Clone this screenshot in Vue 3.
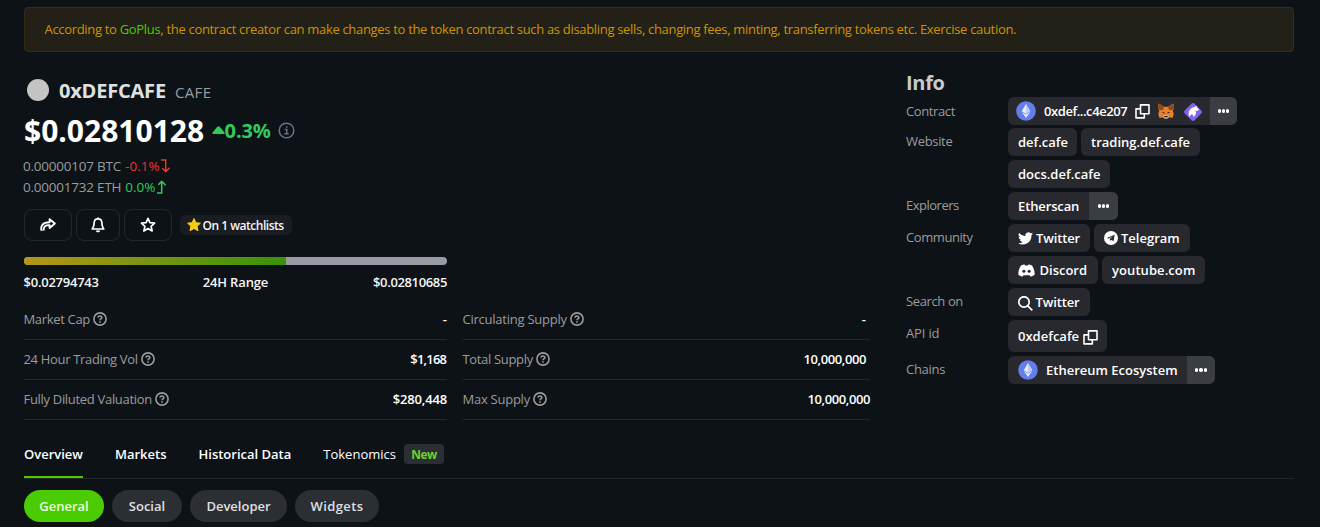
<script setup>
const leftStats = [
  { k: 'Market Cap', v: '-', c: 'cap' },
  { k: '24 Hour Trading Vol', v: '$1,168', c: 'vol' },
  { k: 'Fully Diluted Valuation', v: '$280,448', c: 'fdv' },
]
const rightStats = [
  { k: 'Circulating Supply', v: '-', c: 'circ', inset: true },
  { k: 'Total Supply', v: '10,000,000', c: 'total', inset: true },
  { k: 'Max Supply', v: '10,000,000', c: 'max' },
]
</script>

<template>
  <div class="page">
    <div class="banner"><span class="t warn">According to <a>GoPlus</a>, the contract creator can make changes to the token contract such as disabling sells, changing fees, minting, transferring tokens etc. Exercise caution.</span></div>

    <div class="main">
      <section class="coin">
        <div class="name"><i class="logo"></i><h1 class="t">0xDEFCAFE</h1><span class="t sym">CAFE</span></div>
        <div class="price">
          <span class="t amount">$0.02810128</span>
          <svg class="tri" width="13" height="8" viewBox="0 0 13 8"><path d="M1.2 8Q-.3 7.6.6 6.4L5.3.8Q6.5-.5 7.7.8L12.4 6.4Q13.3 7.6 11.8 8Z" fill="#30cb5c" /></svg>
          <span class="t change">0.3%</span>
          <svg class="infoi" width="17" height="17" viewBox="0 0 17 17" fill="none" stroke="#64718a" stroke-width="1.5"><circle cx="8.5" cy="8.5" r="7.3" /><path d="M6.8 7.6h2v4M6.4 11.7h4.4M8 4.9h1.4" /></svg>
        </div>
        <div class="pair"><span class="t btc">0.00000107 BTC</span><span class="t down">-0.1%</span>
          <svg width="11" height="14" viewBox="0 0 11 14" fill="none" stroke="#e8352e" stroke-width="1.5"><path d="M1 .9h4.7v11.4M2.3 9.2l3.4 3.4 3.9-3.9" /></svg></div>
        <div class="pair"><span class="t eth">0.00001732 ETH</span><span class="t up">0.0%</span>
          <svg width="11" height="14" viewBox="0 0 11 14" fill="none" stroke="#30cb5c" stroke-width="1.5"><path d="M1 13h4.7V1.4M2.3 4.8l3.4-3.4 3.9 3.9" /></svg></div>

        <div class="actions">
          <button class="b48"><svg width="16" height="14" viewBox="0 0 16 14" fill="none" stroke="#fff" stroke-width="1.9" stroke-linejoin="round"><path d="M1.6 12.8C.2 8.2 2.6 4.3 9.6 4.3V1.2L14.8 5.6 9.6 10V7.2C6.2 7 3.4 7.6 3.6 12.6" /></svg></button>
          <button class="b44"><svg width="14" height="16" viewBox="0 0 14 16" fill="none" stroke="#fff" stroke-width="1.7" stroke-linejoin="round"><path d="M7 1.9C4.4 1.9 3.1 3.7 3.1 6.2 3.1 9.4 2.5 10.2 1.3 12H12.7C11.5 10.2 10.9 9.4 10.9 6.2 10.9 3.7 9.6 1.9 7 1.9Z" /><path d="M7 .4v1.5M5.4 13.7q1.6 1.6 3.2 0" /></svg></button>
          <button class="b48"><svg width="16" height="16" viewBox="0 0 16 16" fill="none" stroke="#fff" stroke-width="1.7" stroke-linejoin="round"><path d="M8 1.4L9.9 5.7 14.6 6.2 11.1 9.3 12.1 14 8 11.6 3.9 14 4.9 9.3 1.4 6.2 6.1 5.7Z" /></svg></button>
          <div class="watch"><svg width="14" height="14" viewBox="0 0 14 14"><path d="M7 .6L8.9 4.7 13.4 5.2 10.1 8.3 11 12.8 7 10.5 3 12.8 3.9 8.3.6 5.2 5.1 4.7Z" fill="#facc15" stroke="#facc15" stroke-linejoin="round" /></svg><span class="t wl">On 1 watchlists</span></div>
        </div>

        <div class="bar"><i></i></div>
        <div class="range"><span class="t lo">$0.02794743</span><span class="t mid">24H Range</span><span class="t hi">$0.02810685</span></div>

        <div class="stats">
          <div v-for="(col, i) in [leftStats, rightStats]" :key="i">
            <div v-for="s in col" :key="s.k" class="stat" :class="{ inset: s.inset }">
              <span class="t k" :class="s.c">{{ s.k }}</span>
              <svg width="14" height="14" viewBox="0 0 14 14" fill="none" stroke="#9a9b9d" stroke-width="1.6"><circle cx="7" cy="7" r="6.1" /><path d="M5 5.6C5.2 3.4 9 3.6 8.8 5.7 8.7 6.9 7 6.9 7 8.2M7 9.3v1.5" /></svg>
              <span class="t v" :class="'v' + s.c">{{ s.v }}</span>
            </div>
          </div>
        </div>
      </section>

      <aside>
        <h2><span class="t info">Info</span></h2>
        <div class="row first"><label><span class="t l1">Contract</span></label>
          <div class="chips"><div class="chip contract">
            <svg width="20" height="20" viewBox="0 0 20 20"><circle cx="10" cy="10" r="9.8" fill="#627eea" /><path d="M10 3L5.7 10.2 10 12.7 14.3 10.2Z" fill="#fff" opacity=".85" /><path d="M10 3v5.2L14.3 10.2ZM10 8.2v4.5l4.3-2.5Z" fill="#c0cbf6" /><path d="M5.7 11L10 17l4.3-6L10 13.5Z" fill="#e6eafc" /></svg>
            <span class="t addr">0xdef...c4e207</span>
            <svg class="copy" width="15" height="15" viewBox="0 0 15 15" fill="none" stroke="#fff" stroke-width="1.6" stroke-linejoin="round"><path d="M5.5.9H14V9.8H5.5ZM5.5 4.9H1V13.9H9.3V9.8" /></svg>
            <svg class="fox" width="16" height="16" viewBox="0 0 16 16"><path d="M.5.5L6 3.7h4L15.5.5 16 4.6 14.9 8l.8 3.3L14.5 15 11 14.2 9.5 15.5h-3L5 14.2 1.5 15 .3 11.3 1.1 8 0 4.6Z" fill="#e8822a" /><path d="M.5.5L6 3.7 5 6.9.9 7.3 0 4.6ZM15.5.5L10 3.7l1 3.2 4.1.4.9-2.7Z" fill="#934a1b" /><path d="M3.5 9.2l2.7-.2.4 1.8ZM12.5 9.2L9.8 9l-.4 1.8Z" fill="#2b3040" /><path d="M5.6 12.6h4.8l.3 1.6-1.2 1.3h-3l-1.2-1.3Z" fill="#d3bfae" /><path d="M6.4 13h3.2l.3 1.2H6.1Z" fill="#222" /></svg>
            <svg class="rabby" width="18" height="18" viewBox="0 0 18 18"><rect x="2" y="2" width="14" height="14" rx="2.6" transform="rotate(45 9 9)" fill="#7f63f4" /><path d="M5.6 13.8C3.6 11 4.6 5 10 4.2L12.6 2.8 13 4.6 15 6.2 13.4 7.9 11.4 7.8C12.8 9.8 11.6 12.8 9.4 14 9.4 12.4 8.6 11.4 7.6 11.2 6.6 11.9 6.3 12.8 5.6 13.8Z" fill="#fff" /></svg>
            <b class="more"><i></i><i></i><i></i></b></div></div></div>
        <div class="row"><label><span class="t l2">Website</span></label>
          <div class="chips"><div class="chip w69"><span class="t">def.cafe</span></div><div class="chip w119"><span class="t">trading.def.cafe</span></div><div class="chip w102"><span class="t">docs.def.cafe</span></div></div></div>
        <div class="row"><label><span class="t l3">Explorers</span></label>
          <div class="chips"><div class="chip w110"><span class="t c4">Etherscan</span><b class="more m29"><i></i><i></i><i></i></b></div></div></div>
        <div class="row"><label><span class="t l4">Community</span></label>
          <div class="chips">
            <div class="chip w82"><svg class="tw" width="15" height="13" viewBox="0 0 24 20"><path d="M24 2.4a10 10 0 0 1-2.8.8A5 5 0 0 0 23.3.5a10 10 0 0 1-3.1 1.2 4.9 4.9 0 0 0-8.4 4.5A14 14 0 0 1 1.7 1.1a4.9 4.9 0 0 0 1.5 6.5 5 5 0 0 1-2.2-.6 4.9 4.9 0 0 0 3.9 4.9 5 5 0 0 1-2.2.1 4.9 4.9 0 0 0 4.6 3.4A10 10 0 0 1 0 17.4 14 14 0 0 0 21.5 4.9 10 10 0 0 0 24 2.4Z" fill="#fff" /></svg><span class="t c5">Twitter</span></div>
            <div class="chip w96"><svg class="tg" width="14" height="14" viewBox="0 0 14 14"><circle cx="7" cy="7" r="7" fill="#fff" /><path d="M2.7 6.9L10.7 3.7 9.5 10.3 7.2 8.7 6 9.9 5.7 8 9 5 4.8 7.6Z" fill="#27292e" /></svg><span class="t">Telegram</span></div>
            <div class="chip w90"><svg class="dc" width="17" height="13" viewBox="0 0 17 13"><path d="M3 1.4L6.3.3 7 1.4h3L10.7.3 14 1.4C16 4.5 16.9 7.5 16.6 10.9L12.7 12.8 11.7 11.2H5.3L4.3 12.8.4 10.9C.1 7.5 1 4.5 3 1.4Z" fill="#fff" /><circle cx="5.9" cy="7.2" r="1.5" fill="#27292e" /><circle cx="11.1" cy="7.2" r="1.5" fill="#27292e" /></svg><span class="t">Discord</span></div>
            <div class="chip w103"><span class="t c8">youtube.com</span></div></div></div>
        <div class="row"><label><span class="t l5">Search on</span></label>
          <div class="chips"><div class="chip w82"><svg class="se" width="15" height="15" viewBox="0 0 15 15" fill="none" stroke="#fff" stroke-width="1.7"><circle cx="6" cy="6" r="5.2" /><path d="M9.8 9.8L14.3 14.3" /></svg><span class="t c5">Twitter</span></div></div></div>
        <div class="row"><label><span class="t l6">API id</span></label>
          <div class="chips"><div class="chip w99"><span class="t">0xdefcafe</span><svg class="copy2" width="15" height="15" viewBox="0 0 15 15" fill="none" stroke="#fff" stroke-width="1.6" stroke-linejoin="round"><path d="M5.5.9H14V9.8H5.5ZM5.5 4.9H1V13.9H9.3V9.8" /></svg></div></div></div>
        <div class="row"><label><span class="t l7">Chains</span></label>
          <div class="chips"><div class="chip w207"><svg width="20" height="20" viewBox="0 0 20 20"><circle cx="10" cy="10" r="9.8" fill="#627eea" /><path d="M10 3L5.7 10.2 10 12.7 14.3 10.2Z" fill="#fff" opacity=".85" /><path d="M10 3v5.2L14.3 10.2ZM10 8.2v4.5l4.3-2.5Z" fill="#c0cbf6" /><path d="M5.7 11L10 17l4.3-6L10 13.5Z" fill="#e6eafc" /></svg><span class="t c10">Ethereum Ecosystem</span><b class="more m28"><i></i><i></i><i></i></b></div></div></div>
      </aside>
    </div>

    <nav class="tabs"><a class="on"><span class="t">Overview</span></a><a><span class="t">Markets</span></a><a><span class="t">Historical Data</span></a><a class="light"><span class="t">Tokenomics</span></a><em><span class="t nw">New</span></em></nav>
    <div class="pills"><a class="p80 on"><span class="t">General</span></a><a class="p70"><span class="t">Social</span></a><a class="p97"><span class="t">Developer</span></a><a class="p84"><span class="t p4">Widgets</span></a></div>
  </div>
</template>

<style>
html, body { background: #0d1217; overflow: hidden; }
</style>
<style scoped>
* { box-sizing: border-box; }
.page { width: 1320px; height: 527px; padding: 7px 26px 0 24px; overflow: hidden; background: #0d1217; color: #f4f5f6; font-family: "Open Sans", sans-serif; font-size: 13px; }
.t { white-space: nowrap; display: inline-block; }
svg { display: block; flex: none; }
.banner { height: 45px; border: 1px solid #352c15; border-radius: 4px; background: #222017; color: #cf9300; padding: 0 0 1px 19.5px; display: flex; align-items: center; }
.warn { letter-spacing: -.316px; }
.banner a { color: #4bcc00; }
.main { display: flex; height: 380px; }
.coin { width: 846px; padding-top: 26px; }
.name { display: flex; align-items: center; height: 25px; }
.logo { width: 22px; height: 22px; border-radius: 50%; background: #c4c4c4; margin: -1px 10px 0 3px; }
h1 { margin: 0; font-size: 20px; line-height: 25px; font-weight: 700; color: #dfe0e2; letter-spacing: -.2px; }
.sym { margin-left: 9px; font-size: 15px; color: #9b9c9e; padding-top: 3px; letter-spacing: .35px; }
.price { display: flex; align-items: center; height: 36px; margin-top: 10px; }
.amount { font-size: 30px; line-height: 36px; font-weight: 700; color: #fff; }
.tri { margin: -3px 0 0 7.5px; }
.change { font-size: 20px; line-height: 26px; font-weight: 700; color: #30cb5c; margin-top: -1px; letter-spacing: -.1px; }
.infoi { margin: -2px 0 0 7px; }
.pair { display: flex; align-items: center; height: 21px; color: #9b9c9e; font-size: 13.5px; margin-left: -1px; }
.price + .pair { margin-top: 6px; }
.btc, .eth { letter-spacing: -.22px; }
.down { color: #e8352e; margin-left: 4px; }
.up { color: #30cb5c; margin-left: 4px; }
.actions { display: flex; gap: 4px; margin-top: 12px; height: 32px; align-items: center; }
button { height: 32px; border: 1px solid #24282c; border-radius: 8px; background: none; padding: 0; display: flex; align-items: center; justify-content: center; }
.b48 { width: 48px; }
.b44 { width: 44px; }
.watch { width: 112px; height: 20px; border-radius: 6px; background: #191d21; margin-left: 4px; display: flex; align-items: center; padding-left: 7px; font-size: 12px; font-weight: 600; }
.wl { margin-left: 1.5px; letter-spacing: -.48px; }
.bar { margin-top: 16px; width: 423px; height: 8px; border-radius: 4px; background: #9a9aa3; overflow: hidden; }
.bar i { display: block; height: 8px; width: 262px; background: linear-gradient(90deg, #b6951a, #37930a); }
.range { width: 423px; height: 34px; display: flex; justify-content: space-between; align-items: center; font-weight: 600; }
.lo { letter-spacing: -.24px; margin-left: -.5px; }
.mid { letter-spacing: -.14px; margin-left: -1px; }
.hi { letter-spacing: -.36px; }
.stats { display: grid; grid-template-columns: 423px 407px; column-gap: 16px; padding-top: 1px; }
.stat { height: 40px; border-bottom: 1px solid #24282c; display: flex; align-items: center; gap: 3px; color: #9b9c9e; padding-bottom: 1px; }
.k { margin-left: -.5px; }
.cap { letter-spacing: -.33px; }
.vol { letter-spacing: -.33px; }
.fdv { letter-spacing: -.31px; }
.circ { letter-spacing: -.24px; }
.total { letter-spacing: -.33px; }
.max { letter-spacing: -.25px; }
.v { margin-left: auto; font-weight: 600; color: #fff; }
.vvol { letter-spacing: -.8px; margin-right: .8px; }
.vfdv { letter-spacing: -.15px; }
.vtotal, .vmax { letter-spacing: -.4px; }
.inset { padding-right: 4px; }
aside { margin-left: 36px; padding-top: 18px; }
h2 { margin: 0; height: 27px; line-height: 26px; font-size: 20px; color: #c9cacc; }
.info { letter-spacing: -.3px; }
.row { display: flex; margin-bottom: 4px; }
.row.first { margin-bottom: 3px; }
label { width: 102px; color: #9b9c9e; height: 28px; line-height: 26px; }
.first label { line-height: 28px; }
.l1 { letter-spacing: -.38px; }
.l2 { letter-spacing: -.33px; }
.l3 { letter-spacing: -.5px; }
.l4 { letter-spacing: -.42px; }
.l5 { letter-spacing: -.38px; }
.l6 { letter-spacing: -.15px; }
.l7 { letter-spacing: -.3px; }
.chips { width: 240px; display: flex; flex-wrap: wrap; gap: 4px; }
.chip { height: 28px; border-radius: 6px; background: #27292e; display: flex; align-items: center; padding-left: 10px; font-weight: 600; overflow: hidden; color: #fff; }
.more { display: flex; gap: 1px; align-items: center; justify-content: center; width: 27px; height: 100%; margin-left: auto; background: #3a3e42; }
.more i { width: 3.3px; height: 3.3px; border-radius: 50%; background: #fff; }
.m29 { width: 29px; }
.m28 { width: 28px; }
.contract { width: 229px; padding-left: 8px; }
.addr { margin-left: 8px; letter-spacing: -.43px; }
.copy { margin-left: 8px; }
.fox { margin-left: 8px; }
.rabby { margin-left: 10px; margin-top: 2px; }
.w69 { width: 69px; }
.w119 { width: 119px; }
.w102 { width: 102px; }
.w110 { width: 110px; }
.w82 { width: 82px; }
.w96 { width: 96px; }
.w90 { width: 90px; }
.w103 { width: 103px; }
.w99 { width: 99px; height: 32px; }
.w207 { width: 207px; }
.c4, .c5 { letter-spacing: -.12px; }
.c8 { letter-spacing: .08px; }
.tw, .tg, .se { margin-right: 3px; }
.dc { margin-right: 4.5px; }
.se { margin-top: 3px; margin-left: -.5px; }
.copy2 { margin: 3px 0 0 4px; }
.c10 { margin-left: 8px; }
.tabs { height: 47px; border-bottom: 1px solid #24282c; display: flex; font-weight: 600; gap: 32px; }
.tabs a { color: #fff; line-height: 44px; height: 46px; }
.tabs .on { border-bottom: 2px solid #4bcc00; }
.tabs .light { font-weight: 400; }
em { font-style: normal; width: 40px; height: 20px; background: #2b2f33; border-radius: 4px; color: #6bd22f; margin: 12px 0 0 -24px; display: flex; align-items: center; justify-content: center; font-size: 12px; font-weight: 700; }
.nw { letter-spacing: -.6px; }
.pills { display: flex; gap: 8px; margin-top: 11px; }
.pills a { height: 32px; border-radius: 16px; background: #2b2e33; color: #dfe0e2; font-weight: 600; display: flex; align-items: center; justify-content: center; }
.pills .on { background: #4bcc00; color: #edfae6; }
.p80 { width: 80px; }
.p70 { width: 70px; }
.p97 { width: 97px; }
.p84 { width: 84px; }
.p4 { letter-spacing: .4px; }
</style>
